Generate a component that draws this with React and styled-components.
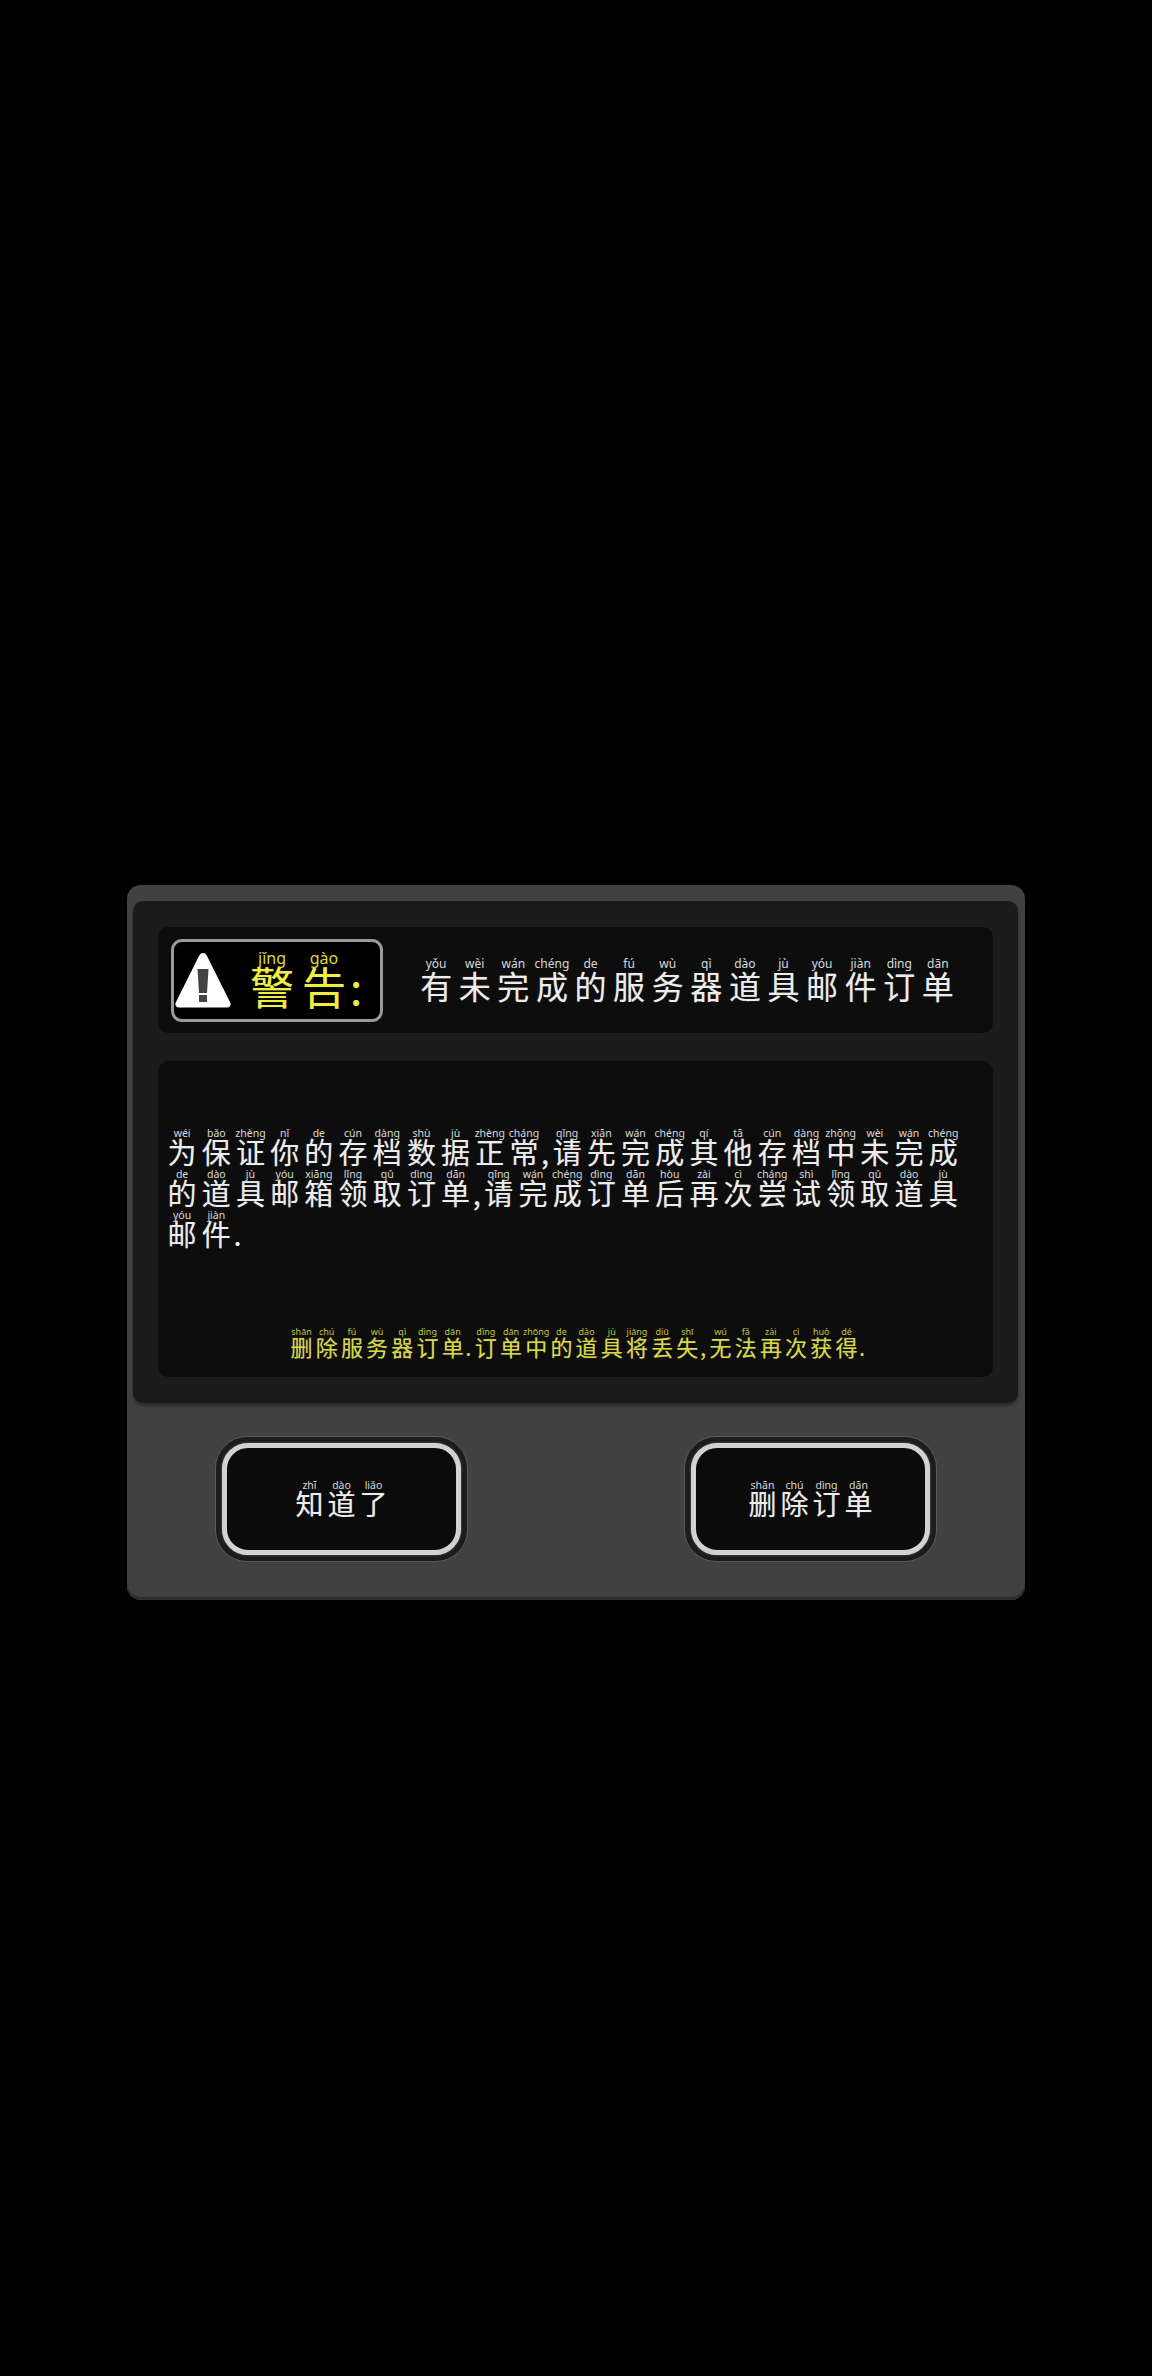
import React from "react";
import styled, { createGlobalStyle } from "styled-components";

const sizes = {
  badge: { cell: 52, han: 44, hanLine: 44, py: 16, pyLine: 18, lift: 3 },
  title: { cell: 38.6, han: 32, hanLine: 32, py: 12, pyLine: 14, lift: 2 },
  body: { cell: 34.2, han: 29, hanLine: 29, py: 10.5, pyLine: 12, lift: 2 },
  hint: { cell: 25.2, han: 22, hanLine: 22, py: 9, pyLine: 10, lift: 2 },
  button: { cell: 32, han: 28, hanLine: 28, py: 10.5, pyLine: 12, lift: 2 },
};

const titleText = [
  ["有", "yǒu"], ["未", "wèi"], ["完", "wán"], ["成", "chéng"], ["的", "de"], ["服", "fú"], ["务", "wù"],
  ["器", "qì"], ["道", "dào"], ["具", "jù"], ["邮", "yóu"], ["件", "jiàn"], ["订", "dìng"], ["单", "dān"],
];

const bodyText = [
  ["为", "wéi"], ["保", "bǎo"], ["证", "zhèng"], ["你", "nǐ"], ["的", "de"], ["存", "cún"], ["档", "dàng"],
  ["数", "shù"], ["据", "jù"], ["正", "zhèng"], ["常", "cháng"], [","], ["请", "qǐng"], ["先", "xiān"],
  ["完", "wán"], ["成", "chéng"], ["其", "qí"], ["他", "tā"], ["存", "cún"], ["档", "dàng"], ["中", "zhōng"],
  ["未", "wèi"], ["完", "wán"], ["成", "chéng"], ["的", "de"], ["道", "dào"], ["具", "jù"], ["邮", "yóu"],
  ["箱", "xiāng"], ["领", "lǐng"], ["取", "qǔ"], ["订", "dìng"], ["单", "dān"], [","], ["请", "qǐng"],
  ["完", "wán"], ["成", "chéng"], ["订", "dìng"], ["单", "dān"], ["后", "hòu"], ["再", "zài"], ["次", "cì"],
  ["尝", "cháng"], ["试", "shì"], ["领", "lǐng"], ["取", "qǔ"], ["道", "dào"], ["具", "jù"], ["邮", "yóu"],
  ["件", "jiàn"], ["."],
];

const hintText = [
  ["删", "shān"], ["除", "chú"], ["服", "fú"], ["务", "wù"], ["器", "qì"], ["订", "dìng"], ["单", "dān"], ["."],
  ["订", "dìng"], ["单", "dān"], ["中", "zhōng"], ["的", "de"], ["道", "dào"], ["具", "jù"], ["将", "jiāng"],
  ["丢", "diū"], ["失", "shī"], [","], ["无", "wú"], ["法", "fǎ"], ["再", "zài"], ["次", "cì"], ["获", "huò"],
  ["得", "dé"], ["."],
];

const GlobalStyle = createGlobalStyle`
  html, body {
    margin: 0;
    background: #000;
  }
`;

const Page = styled.div`
  min-height: 2376px;
  box-sizing: border-box;
  padding-top: 885px;
  background: #000;
  display: flex;
  justify-content: center;
  align-items: flex-start;
`;

const Panel = styled.div`
  width: 898px;
  height: 715px;
  box-sizing: border-box;
  display: flex;
  flex-direction: column;
  border-radius: 14px;
  background: #414141;
  box-shadow: inset 0 -3px 0 #2e2e2e;
`;

const Upper = styled.div`
  height: 502px;
  margin: 16px 7px 0 6px;
  box-sizing: border-box;
  padding: 26px 25px;
  display: flex;
  flex-direction: column;
  gap: 28px;
  border-radius: 10px;
  background: #1b1b1b;
  box-shadow: 0 3px 3px #2c2c2c;
`;

const HeaderBox = styled.div`
  height: 106px;
  box-sizing: border-box;
  padding-left: 13px;
  padding-right: 12px;
  display: flex;
  align-items: center;
  border-radius: 10px;
  background: #0d0d0d;
`;

const Badge = styled.div`
  width: 212px;
  height: 83px;
  box-sizing: border-box;
  padding-left: 1px;
  display: flex;
  align-items: center;
  border: 3px solid #9a9a9a;
  border-radius: 11px;
  background: #000;
`;

const WarnIcon = styled.svg`
  width: 56px;
  height: 56px;
  margin-right: 15px;
  flex-shrink: 0;
`;

const TitleLine = styled.div`
  flex: 1;
  padding-left: 10px;
  display: flex;
  justify-content: center;
  color: #ececec;
`;

const BodyBox = styled.div`
  flex: 1;
  box-sizing: border-box;
  padding: 66px 7px 18px;
  display: flex;
  flex-direction: column;
  justify-content: space-between;
  border-radius: 10px;
  background: #0d0d0d;
`;

const Paragraph = styled.div`
  display: flex;
  flex-wrap: wrap;
  color: #ececec;
`;

const Hint = styled.div`
  display: flex;
  justify-content: center;
  padding-left: 5px;
  color: #d9d93f;
`;

const Footer = styled.div`
  flex: 1;
  box-sizing: border-box;
  padding: 33px 88px 0;
  display: flex;
  justify-content: space-between;
  align-items: flex-start;
`;

const ButtonFrame = styled.div`
  width: 253px;
  height: 126px;
  box-sizing: border-box;
  padding: 6px;
  border: 1px solid #5a5a5a;
  border-radius: 32px;
  background: #1c1c1c;
`;

const ActionButton = styled.button`
  width: 100%;
  height: 100%;
  box-sizing: border-box;
  padding: 0;
  display: flex;
  justify-content: center;
  align-items: center;
  border: 5px solid #d2d2d2;
  border-radius: 26px;
  background: #0b0b0b;
  box-shadow: 0 0 2px #8a8a8a;
  color: #ececec;
`;

const Cell = styled.span`
  display: inline-flex;
  flex-direction: column;
  align-items: center;
  width: ${(p) => sizes[p.$size].cell}px;
`;

const Mark = styled.span`
  display: inline-flex;
  flex-direction: column;
  width: ${(p) => (p.$size === "hint" ? 8 : p.$size === "badge" ? 12 : 9)}px;
`;

const Pinyin = styled.span`
  display: block;
  white-space: nowrap;
  height: ${(p) => sizes[p.$size].pyLine}px;
  font-family: "Noto Sans", "Liberation Sans", sans-serif;
  font-size: ${(p) => sizes[p.$size].py}px;
  line-height: ${(p) => sizes[p.$size].pyLine}px;
  opacity: 0.9;
`;

const Han = styled.span`
  display: block;
  white-space: nowrap;
  margin-top: ${(p) => -sizes[p.$size].lift}px;
  margin-bottom: ${(p) => sizes[p.$size].lift}px;
  font-family: "Noto Sans CJK SC", "Liberation Sans", sans-serif;
  font-size: ${(p) => sizes[p.$size].han}px;
  line-height: ${(p) => sizes[p.$size].hanLine}px;
  text-shadow: 0 0 1px rgba(255, 255, 255, 0.35);
`;

const BadgeWord = styled.div`
  display: flex;
  color: #f0f03c;
`;

const Word = ({ items, size }) =>
  items.map(([han, py], i) =>
    py ? (
      <Cell key={i} $size={size}>
        <Pinyin $size={size}>{py}</Pinyin>
        <Han $size={size}>{han}</Han>
      </Cell>
    ) : (
      <Mark key={i} $size={size}>
        <Pinyin $size={size} />
        <Han $size={size}>{han}</Han>
      </Mark>
    )
  );

export default function App() {
  return (
    <Page>
      <GlobalStyle />
      <Panel>
        <Upper>
          <HeaderBox>
            <Badge>
              <WarnIcon viewBox="0 0 56 56">
                <path
                  d="M28 1 C30 1 31 2 32 4 L55 50 C56.500 53 55 55.500 52 55.500 L4 55.500 C1 55.500 -0.500 53 1 50 L24 4 C25 2 26 1 28 1 Z"
                  fill="#fff"
                />
                <path d="M22.500 17 H33.500 L32 41 H24 Z" fill="#444" />
                <rect x="24" y="43" width="8" height="7" fill="#444" />
              </WarnIcon>
              <BadgeWord>
                <Word items={[["警", "jǐng"], ["告", "gào"], [":"]]} size="badge" />
              </BadgeWord>
            </Badge>
            <TitleLine>
              <Word items={titleText} size="title" />
            </TitleLine>
          </HeaderBox>
          <BodyBox>
            <Paragraph>
              <Word items={bodyText} size="body" />
            </Paragraph>
            <Hint>
              <Word items={hintText} size="hint" />
            </Hint>
          </BodyBox>
        </Upper>
        <Footer>
          <ButtonFrame>
            <ActionButton>
              <Word items={[["知", "zhī"], ["道", "dào"], ["了", "liǎo"]]} size="button" />
            </ActionButton>
          </ButtonFrame>
          <ButtonFrame>
            <ActionButton>
              <Word items={[["删", "shān"], ["除", "chú"], ["订", "dìng"], ["单", "dān"]]} size="button" />
            </ActionButton>
          </ButtonFrame>
        </Footer>
      </Panel>
    </Page>
  );
}
